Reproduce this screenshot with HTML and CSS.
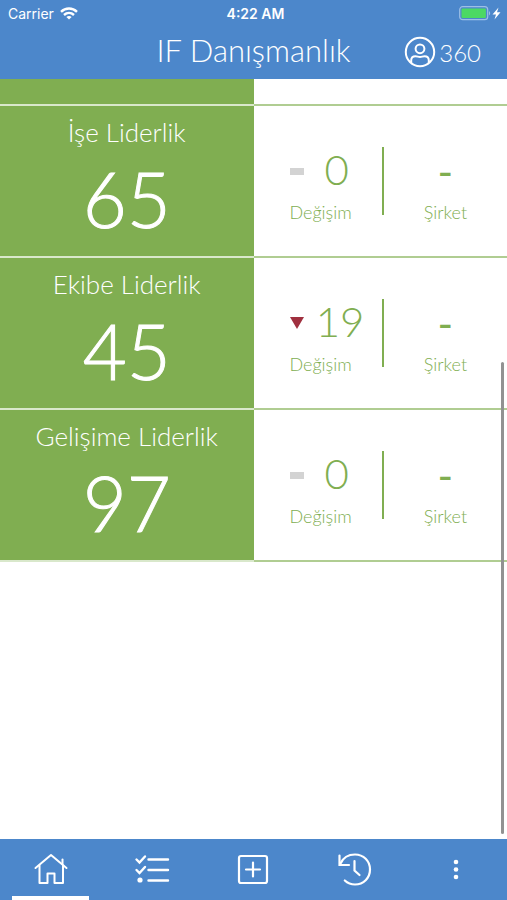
FILE: index.html
```
<!DOCTYPE html>
<html lang="tr">
<head>
  <meta charset="UTF-8">
  <meta name="viewport" content="width=device-width, initial-scale=1.0">
  <title>IF Danışmanlık</title>
  <link rel="stylesheet" href="styles.css">
</head>
<body>

  <header class="header">
    <div class="status-bar">
      <div class="carrier">
        <span>Carrier</span>
        <svg width="18" height="13" viewBox="0 0 18 13" fill="none" stroke="#fff" stroke-width="2.4">
          <path d="M1 4.8C5.5 0.4 12.5 0.4 17 4.8"/>
          <path d="M4 8C7 5.2 11 5.2 14 8"/>
          <path d="M9 12.6L6.4 10C7.9 8.7 10.1 8.7 11.6 10Z" fill="#fff" stroke="none"/>
        </svg>
      </div>
      <div class="clock">4:22 AM</div>
      <div class="battery">
        <svg width="44" height="16" viewBox="0 0 44 16">
          <rect x="0.7" y="0.7" width="28" height="13" rx="3" fill="none" stroke="#9dbfe6" stroke-width="1.2"/>
          <rect x="2.5" y="2.5" width="24.4" height="9.4" rx="1" fill="#4cd964"/>
          <path d="M30 5C31.6 5.8 31.6 8.6 30 9.4Z" fill="#9dbfe6"/>
          <path d="M39.5 1.5L33.5 8.5H37L35.5 13.5L41.5 6.3H38Z" fill="#fff"/>
        </svg>
      </div>
    </div>
    <div class="title-bar">
      <h1>IF Danışmanlık</h1>
      <button class="profile" type="button">
        <svg width="32" height="32" viewBox="0 0 32 32" fill="none" stroke="#fff" stroke-width="2">
          <circle cx="16" cy="16" r="14.2"/>
          <circle cx="16" cy="12.8" r="4.4"/>
          <path d="M7.2 27V24.5C7.2 21.5 9 20.2 11.5 20.2C13.5 20.2 14 21 16 21C18 21 18.5 20.2 20.5 20.2C23 20.2 24.8 21.5 24.8 24.5V27"/>
        </svg>
        <span>360</span>
      </button>
    </div>
  </header>

  <main class="content">
    <div class="row row-cut">
      <div class="score"></div>
      <div class="details"></div>
    </div>

    <section class="row">
      <div class="score">
        <h2>İşe Liderlik</h2>
        <p>65</p>
      </div>
      <div class="details">
        <div class="change">
          <div class="value"><span class="same"></span><span class="number">0</span></div>
          <div class="label">Değişim</div>
        </div>
        <div class="company">
          <div class="value"><span class="none">-</span></div>
          <div class="label">Şirket</div>
        </div>
      </div>
    </section>

    <section class="row">
      <div class="score">
        <h2>Ekibe Liderlik</h2>
        <p>45</p>
      </div>
      <div class="details">
        <div class="change">
          <div class="value"><span class="down"></span><span class="number">19</span></div>
          <div class="label">Değişim</div>
        </div>
        <div class="company">
          <div class="value"><span class="none">-</span></div>
          <div class="label">Şirket</div>
        </div>
      </div>
    </section>

    <section class="row">
      <div class="score">
        <h2>Gelişime Liderlik</h2>
        <p>97</p>
      </div>
      <div class="details">
        <div class="change">
          <div class="value"><span class="same"></span><span class="number">0</span></div>
          <div class="label">Değişim</div>
        </div>
        <div class="company">
          <div class="value"><span class="none">-</span></div>
          <div class="label">Şirket</div>
        </div>
      </div>
    </section>

    <div class="scrollbar"></div>
  </main>

  <nav class="tabs">
    <a class="tab active" href="#home" aria-label="Ana sayfa">
      <svg width="36" height="36" viewBox="0 0 36 36" fill="none" stroke="#fff" stroke-width="2" stroke-linecap="round" stroke-linejoin="round">
        <path d="M2.5 17L18 4L33.5 17"/>
        <path d="M6.5 14.5V32H14.5V22.5H21.5V32H30V14.5"/>
        <path d="M29.5 13V8.5"/>
      </svg>
    </a>
    <a class="tab" href="#list" aria-label="Liste">
      <svg width="36" height="36" viewBox="0 0 36 36" fill="none" stroke="#fff" stroke-width="2.4" stroke-linecap="round">
        <path d="M2.5 8.5L5.5 11.5L11 5.5M2.5 19L5.5 22L11 16"/>
        <path d="M14.5 8.5H34M14.5 19H34M14.5 29.5H34"/>
        <circle cx="6" cy="29" r="2.6" fill="#fff" stroke="none"/>
      </svg>
    </a>
    <a class="tab" href="#add" aria-label="Ekle">
      <svg width="36" height="36" viewBox="0 0 36 36" fill="none" stroke="#fff" stroke-width="2.2" stroke-linecap="round">
        <rect x="4" y="5" width="28" height="27" rx="2"/>
        <path d="M18 11.5V25.5M11 18.5H25"/>
      </svg>
    </a>
    <a class="tab" href="#history" aria-label="Geçmiş">
      <svg width="36" height="36" viewBox="0 0 36 36" fill="none" stroke="#fff" stroke-width="2.2" stroke-linecap="round">
        <path d="M3.5 12.5C6 7 11.5 3.5 18 3.5C26.5 3.5 33 10 33 18.5C33 27 26.5 33.5 18 33.5C14 33.5 10.5 32 7.8 29.5"/>
        <path d="M2.5 4.5V14H12"/>
        <path d="M17.5 10V19.5L22.5 24"/>
      </svg>
    </a>
    <a class="tab" href="#more" aria-label="Diğer">
      <svg width="36" height="36" viewBox="0 0 36 36" fill="#fff">
        <circle cx="18" cy="11" r="2.3"/>
        <circle cx="18" cy="18.5" r="2.3"/>
        <circle cx="18" cy="26" r="2.3"/>
      </svg>
    </a>
  </nav>

</body>
</html>
```

FILE: styles.css
```
* {
  box-sizing: border-box;
}
body {
  margin: 0;
  min-height: 100vh;
  display: flex;
  flex-direction: column;
  font-family: Lato, sans-serif;
  font-weight: 300;
  background-color: #ffffff;
}
h1, h2, p {
  margin: 0;
  font-weight: 300;
}
.header {
  height: 79px;
  background-color: #4c87cb;
  color: #ffffff;
}
.status-bar {
  display: grid;
  grid-template-columns: 1fr auto 1fr;
  align-items: center;
  height: 27px;
  padding: 0 4px 0 8px;
  font-family: Inter, sans-serif;
  font-size: 14px;
  font-weight: 400;
}
.carrier {
  display: flex;
  align-items: center;
  gap: 6px;
}
.clock {
  font-weight: 600;
}
.battery {
  display: flex;
  justify-content: flex-end;
}
.title-bar {
  display: grid;
  grid-template-columns: 1fr auto 1fr;
  align-items: center;
  height: 46px;
}
.title-bar h1 {
  grid-column: 2;
  font-size: 31px;
  line-height: 46px;
}
.profile {
  display: flex;
  align-items: center;
  justify-self: end;
  gap: 3px;
  margin-right: 26px;
  padding: 4px 0 0;
  border: none;
  background: none;
  color: #ffffff;
  font-family: Lato, sans-serif;
  font-size: 24px;
  font-weight: 300;
  cursor: pointer;
}
.content {
  flex: 1;
  position: relative;
}
.row {
  display: grid;
  grid-template-columns: 1fr 1fr;
  min-height: 152px;
}
.row-cut {
  min-height: 27px;
}
.score {
  padding-top: 10px;
  background-color: #80ae51;
  border-bottom: 2px solid #d9e8cb;
  color: #ffffff;
  text-align: center;
}
.score h2 {
  font-size: 26px;
  line-height: 32px;
}
.score p {
  font-size: 76px;
  line-height: 102px;
  -webkit-text-stroke: 1px #ffffff;
}
.details {
  display: grid;
  grid-template-columns: 130fr 123fr;
  align-items: center;
  border-bottom: 2px solid #b0cd92;
  color: #80ae51;
}
.change, .company {
  height: 68px;
  text-align: center;
}
.change {
  padding-left: 6px;
  border-right: 2px solid #80ae51;
}
.value {
  display: flex;
  align-items: center;
  justify-content: center;
  height: 48px;
}
.change .value {
  gap: 12px;
  padding-left: 6px;
}
.number {
  width: 42px;
  font-size: 42px;
  line-height: 44px;
  padding-bottom: 4px;
}
.same {
  width: 14px;
  height: 7px;
  background-color: #d3d3d3;
}
.down {
  border: 7px solid transparent;
  border-top: 12px solid #a0303f;
  border-bottom: none;
}
.none {
  font-size: 42px;
  font-weight: 400;
  line-height: 44px;
}
.label {
  font-size: 18px;
  line-height: 34px;
}
.scrollbar {
  position: absolute;
  top: 283px;
  right: 3px;
  bottom: 5px;
  width: 3px;
  border-radius: 2px;
  background-color: #929292;
}
.tabs {
  display: grid;
  grid-template-columns: repeat(5, 1fr);
  height: 61px;
  background-color: #4c87cb;
}
.tab {
  display: flex;
  justify-content: center;
  padding-top: 12px;
}
.active {
  margin: 0 12px;
  border-bottom: 4px solid #ffffff;
}
```
